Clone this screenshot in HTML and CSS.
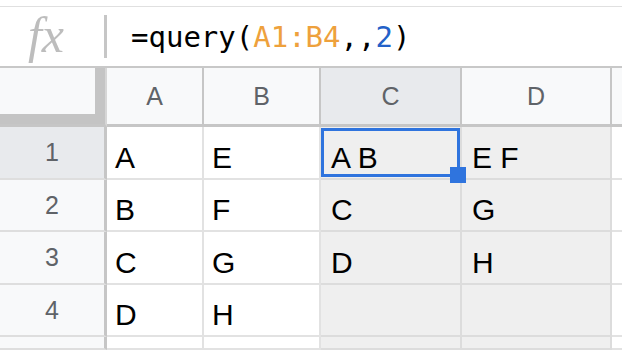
FILE: index.html
```html
<!DOCTYPE html>
<html lang="en-US">
<head>
    <meta charset="UTF-8">
    <meta name="viewport" content="width=device-width, initial-scale=1.0">
    <title>query</title>
    <link rel="stylesheet" href="styles.css">
</head>
<body>
    <!-- formula bar -->
    <div class="formula-bar">
        <div class="fx">fx</div>
        <div class="divider"></div>
        <div class="formula">=query(<span class="ref">A1:B4</span>,,<span class="num">2</span>)</div>
    </div>

    <!-- sheet grid -->
    <div class="sheet">
        <div class="corner"><div class="corner-inner"></div></div>
        <div class="col-head">A</div>
        <div class="col-head">B</div>
        <div class="col-head active">C</div>
        <div class="col-head">D</div>
        <div class="col-head last"></div>

        <div class="row-head active">1</div>
        <div class="cell">A</div>
        <div class="cell">E</div>
        <div class="cell out selected">A B<div class="selection"></div><div class="handle"></div></div>
        <div class="cell out">E F</div>
        <div class="cell last"></div>

        <div class="row-head">2</div>
        <div class="cell">B</div>
        <div class="cell">F</div>
        <div class="cell out">C</div>
        <div class="cell out">G</div>
        <div class="cell last"></div>

        <div class="row-head">3</div>
        <div class="cell">C</div>
        <div class="cell">G</div>
        <div class="cell out">D</div>
        <div class="cell out">H</div>
        <div class="cell last"></div>

        <div class="row-head">4</div>
        <div class="cell">D</div>
        <div class="cell">H</div>
        <div class="cell out"></div>
        <div class="cell out"></div>
        <div class="cell last"></div>

        <div class="row-head"></div>
        <div class="cell"></div>
        <div class="cell"></div>
        <div class="cell out"></div>
        <div class="cell out"></div>
        <div class="cell last"></div>
    </div>
</body>
</html>
```

FILE: styles.css
```css
body {
    margin: 0;
    height: 350px;
    background-color: #fff;
    font-family: "Liberation Sans", Arial, sans-serif;
    overflow: hidden;
}

.formula-bar {
    margin-top: 6px;
    height: 62px;
    border-top: 1px solid #e0e0e0;
    border-bottom: 2px solid #c8c8c8;
    display: flex;
    align-items: center;
    box-sizing: border-box;
}
.fx {
    width: 104px;
    text-align: center;
    font-family: "Liberation Serif", serif;
    font-style: italic;
    font-size: 50px;
    color: #bdbdbd;
    padding-right: 12px;
    box-sizing: border-box;
    line-height: 1;
    margin-top: -4px;
}
.divider {
    width: 3px;
    height: 43px;
    background-color: #c6c6c6;
}
.formula {
    margin-left: 24px;
    font-family: "DejaVu Sans Mono", monospace;
    font-size: 29px;
    color: #000;
}
.ref {
    color: #eea13c;
}
.num {
    color: #2361c8;
}

.sheet {
    display: grid;
    grid-template-columns: 107px 97px 117px 141px 150px 1fr;
    grid-template-rows: 59px 53px 52px 53px 52px 13px;
}

.corner {
    display: flex;
    background-color: #f8f9fa;
    border-bottom: 3px solid #c6c6c6;
    border-right: 2px solid #d6d6d6;
}
.corner-inner {
    flex: 1;
    border-right: 10px solid #c4c4c4;
    border-bottom: 10px solid #c4c4c4;
}

.col-head {
    background-color: #f8f9fa;
    border-right: 2px solid #c6c6c6;
    border-bottom: 3px solid #c6c6c6;
    display: flex;
    align-items: center;
    justify-content: center;
    font-size: 25px;
    color: #5f6368;
}
.col-head.active {
    background-color: #e8eaed;
}
.col-head.last {
    border-right: none;
}

.row-head {
    background-color: #f8f9fa;
    border-right: 3px solid #c6c6c6;
    border-bottom: 2px solid #dedede;
    display: flex;
    align-items: center;
    justify-content: center;
    font-size: 25px;
    color: #5f6368;
}
.row-head.active {
    background-color: #e8eaed;
}

.cell {
    position: relative;
    background-color: #fff;
    border-right: 2px solid #e2e2e2;
    border-bottom: 2px solid #e2e2e2;
    display: flex;
    align-items: flex-end;
    padding: 0 0 4px 8px;
    font-size: 30px;
    line-height: 32px;
    color: #000;
    white-space: pre;
}
.cell.out {
    background-color: #efefef;
    border-right-color: #dcdcdc;
    border-bottom-color: #dcdcdc;
    padding-left: 10px;
}
.cell.last {
    border-right: none;
}

.selection {
    position: absolute;
    top: 1px;
    left: 0;
    right: 0;
    bottom: 1px;
    border: 3px solid #2f74de;
}
.handle {
    position: absolute;
    width: 16px;
    height: 16px;
    right: -6px;
    bottom: -5px;
    background-color: #2f74de;
    z-index: 2;
}
```
